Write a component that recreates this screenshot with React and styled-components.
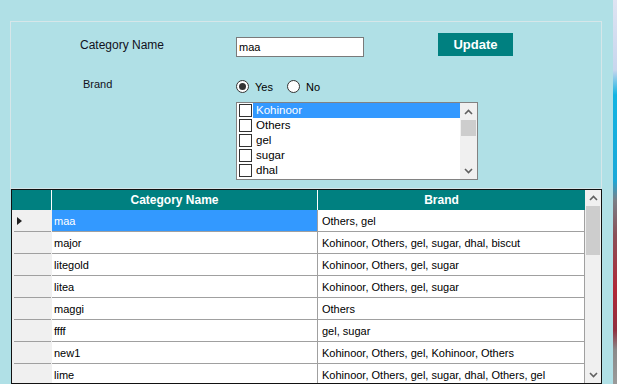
import React from 'react'
import styled, { createGlobalStyle } from 'styled-components'

const GlobalStyle = createGlobalStyle`
  html, body {
    margin: 0;
    padding: 0;
    background: #b0e0e6;
  }
  body {
    font-family: "Liberation Sans", Arial, sans-serif;
    font-size: 11px;
    color: #000;
  }
`

const Screen = styled.div`
  display: flex;
  width: 617px;
  height: 384px;
  overflow: hidden;
`
const Window = styled.div`
  width: 613px;
  padding-top: 21px;
  box-sizing: border-box;
  background: #b0e0e6;
`
const DesktopEdge = styled.div`
  width: 4px;
  background: linear-gradient(
    to bottom,
    #dfe4f2 0px,
    #c9d6ee 70px,
    #12b4e2 95px,
    #1aa8d8 180px,
    #7a8088 200px,
    #8a5058 235px,
    #b02838 290px,
    #903040 330px,
    #8a8a8a 350px,
    #9a9a9a 384px
  );
`

/* ---------- group box with the form ---------- */

const GroupBox = styled.div`
  margin-left: 10px;
  width: 592px;
  height: 168px;
  box-sizing: border-box;
  border: 1px solid #d6e6e9;
`
const FormRow = styled.div`
  display: flex;
  align-items: flex-start;
  margin-top: ${p => p.top}px;
  padding-left: ${p => p.indent}px;
`
const Label = styled.div`
  width: ${p => p.width}px;
  margin-top: ${p => p.offset}px;
  font-size: ${p => p.size}px;
  line-height: 15px;
  color: #101020;
`
const TextBox = styled.div`
  width: 128px;
  height: 20px;
  margin-top: 4px;
  box-sizing: border-box;
  border: 1px solid #7a7a7a;
  background: #fff;
  padding-left: 2px;
  font-size: 11px;
  line-height: 18px;
`
const Button = styled.div`
  width: 75px;
  height: 23px;
  margin-left: 74px;
  background: #008080;
  color: #fff;
  font-weight: bold;
  font-size: 13px;
  display: flex;
  align-items: center;
  justify-content: center;
`
const RadioGroup = styled.div`
  display: flex;
  align-items: center;
  margin-top: 3px;
  height: 13px;
`
const RadioItem = styled.div`
  display: flex;
  align-items: center;
  margin-right: ${p => p.gap}px;
`
const RadioCircle = styled.span`
  width: 13px;
  height: 13px;
  box-sizing: border-box;
  border-radius: 50%;
  border: 1px solid #333;
  background: #fff;
  display: flex;
  align-items: center;
  justify-content: center;
  margin-right: 6px;
  &::after {
    content: "";
    display: ${p => (p.checked ? 'block' : 'none')};
    width: 7px;
    height: 7px;
    border-radius: 50%;
    background: #333;
  }
`

const ListBox = styled.div`
  display: flex;
  width: 242px;
  height: 78px;
  box-sizing: border-box;
  border: 1px solid #828282;
  background: #fff;
`
const ListItems = styled.div`
  width: 223px;
`
const ListItem = styled.div`
  display: flex;
  align-items: center;
  height: 15px;
`
const CheckBox = styled.span`
  width: 13px;
  height: 13px;
  box-sizing: border-box;
  border: 1px solid #333;
  background: #fff;
  margin: 0 1px 0 2px;
`
const ItemText = styled.span`
  flex: 1;
  height: 15px;
  line-height: 15px;
  padding-left: 3px;
  font-size: 11.5px;
  background: ${p => (p.selected ? '#3399ff' : 'transparent')};
  color: ${p => (p.selected ? '#fff' : '#000')};
`

/* ---------- scroll bars ---------- */

const ScrollBar = styled.div`
  display: flex;
  flex-direction: column;
  width: ${p => p.width}px;
  background: #f0f0f0;
`
const ArrowButton = styled.div`
  height: ${p => p.height}px;
  display: flex;
  align-items: center;
  justify-content: center;
  flex-shrink: 0;
`
const Thumb = styled.div`
  height: ${p => p.height}px;
  margin: 0 1px;
  background: #cdcdcd;
  flex-shrink: 0;
`
const Track = styled.div`
  flex: 1;
`

const Chevron = ({ up }) => (
  <svg width="9" height="6" viewBox="0 0 9 6">
    <polyline
      points={up ? '1,5 4.5,1.5 8,5' : '1,1 4.5,4.5 8,1'}
      fill="none"
      stroke="#606060"
      strokeWidth="1.6"
    />
  </svg>
)

const VScroll = ({ width, arrow, thumb }) => (
  <ScrollBar width={width}>
    <ArrowButton height={arrow}><Chevron up /></ArrowButton>
    <Thumb height={thumb} />
    <Track />
    <ArrowButton height={arrow}><Chevron /></ArrowButton>
  </ScrollBar>
)

/* ---------- data grid ---------- */

const Grid = styled.div`
  display: flex;
  margin-left: 11px;
  width: 591px;
  height: 195px;
  box-sizing: border-box;
  border: 1px solid #111;
`
const Table = styled.div`
  width: 573px;
  display: flex;
  flex-direction: column;
  overflow: hidden;
`
const HeaderRow = styled.div`
  display: flex;
  height: 20px;
  flex-shrink: 0;
  background: #008080;
`
// the grid keeps room on the right of each header for a sort glyph
const HeadCell = styled.div`
  width: ${p => p.width}px;
  box-sizing: border-box;
  border-right: ${p => (p.divider ? '1px solid #fff' : 'none')};
  padding-right: ${p => (p.glyph ? 20 : 0)}px;
  color: #fff;
  font-weight: bold;
  font-size: 12px;
  display: flex;
  align-items: center;
  justify-content: center;
`
const Row = styled.div`
  display: flex;
  height: 22px;
  flex-shrink: 0;
`
const RowHeader = styled.div`
  width: 40px;
  display: flex;
  align-items: center;
  padding-left: 5px;
  box-sizing: border-box;
  background: linear-gradient(#a0a0a0, #a0a0a0) no-repeat 2px 100% / 37px 1px, #f0f0f0;
`
const Marker = styled.span`
  width: 0;
  height: 0;
  border-top: 4px solid transparent;
  border-bottom: 4px solid transparent;
  border-left: 5px solid #222;
`
const Cell = styled.div`
  width: ${p => p.width}px;
  box-sizing: border-box;
  border-right: 1px solid #a0a0a0;
  border-bottom: 1px solid #a0a0a0;
  padding-left: ${p => p.pad}px;
  display: flex;
  align-items: center;
  font-size: 11px;
  white-space: nowrap;
  background: ${p => (p.selected ? '#3399ff' : '#fff')};
  color: ${p => (p.selected ? '#fff' : '#000')};
`

const brands = ['Kohinoor', 'Others', 'gel', 'sugar', 'dhal']

const rows = [
  ['maa', 'Others, gel'],
  ['major', 'Kohinoor, Others, gel, sugar, dhal, biscut'],
  ['litegold', 'Kohinoor, Others, gel, sugar'],
  ['litea', 'Kohinoor, Others, gel, sugar'],
  ['maggi', 'Others'],
  ['ffff', 'gel, sugar'],
  ['new1', 'Kohinoor, Others, gel, Kohinoor, Others'],
  ['lime', 'Kohinoor, Others, gel, sugar, dhal, Others, gel'],
]

const App = () => {
  return (
    <Screen>
      <GlobalStyle />
      <Window>
        <GroupBox>
          <FormRow top={11} indent={69}>
            <Label width={156} offset={5} size={12}>Category Name</Label>
            <TextBox>maa</TextBox>
            <Button>Update</Button>
          </FormRow>
          <FormRow top={20} indent={72}>
            <Label width={153} offset={0} size={11}>Brand</Label>
            <RadioGroup>
              <RadioItem gap={14}><RadioCircle checked />Yes</RadioItem>
              <RadioItem gap={0}><RadioCircle />No</RadioItem>
            </RadioGroup>
          </FormRow>
          <FormRow top={9} indent={225}>
            <ListBox>
              <ListItems>
                {brands.map((b, i) => (
                  <ListItem key={b}>
                    <CheckBox />
                    <ItemText selected={i === 0}>{b}</ItemText>
                  </ListItem>
                ))}
              </ListItems>
              <VScroll width={17} arrow={17} thumb={16} />
            </ListBox>
          </FormRow>
        </GroupBox>

        <Grid>
          <Table>
            <HeaderRow>
              <HeadCell width={40} divider />
              <HeadCell width={266} divider glyph>Category Name</HeadCell>
              <HeadCell width={267} glyph>Brand</HeadCell>
            </HeaderRow>
            {rows.map(([name, brand], i) => (
              <Row key={name}>
                <RowHeader>{i === 0 && <Marker />}</RowHeader>
                <Cell width={266} pad={2} selected={i === 0}>{name}</Cell>
                <Cell width={267} pad={4}>{brand}</Cell>
              </Row>
            ))}
          </Table>
          <VScroll width={16} arrow={16} thumb={49} />
        </Grid>
      </Window>
      <DesktopEdge />
    </Screen>
  )
}

export default App
